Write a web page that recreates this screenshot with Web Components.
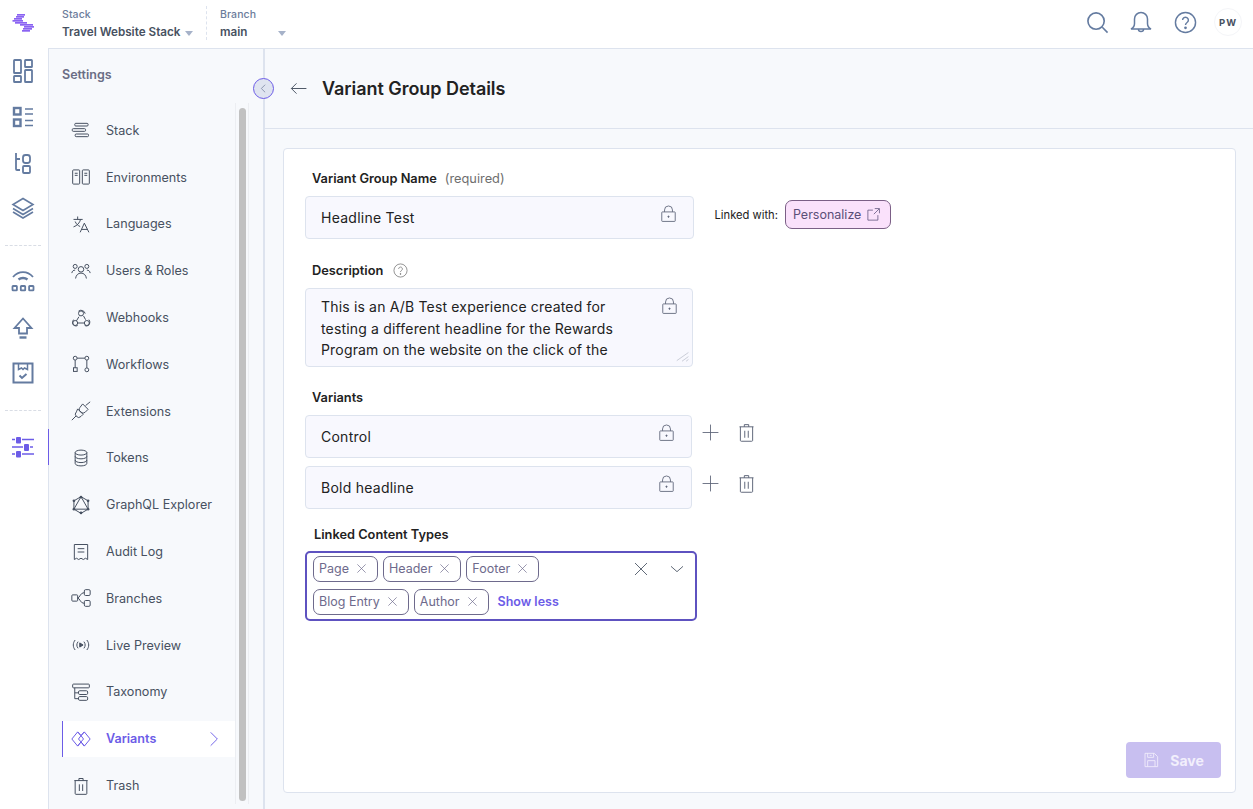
<!DOCTYPE html>
<html lang="en"><head><meta charset="utf-8"><title>Variant Group Details</title>
<style>
html,body{margin:0;padding:0;height:100%;overflow:hidden}
body{font-family:Inter,"Liberation Sans",sans-serif;background:#fff;color:#222}
</style></head><body>
<app-shell>
  <top-bar slot="top"></top-bar>
  <side-rail slot="rail"></side-rail>
  <settings-nav slot="nav"></settings-nav>
  <main-panel slot="main"></main-panel>
</app-shell>
<script>
const ICONS={
logo:`<g fill="#8a63f2" stroke="none"><rect x="5" y="3" width="8" height="1.700"/><rect x="4" y="5" width="8" height="1.700"/><rect x="2" y="7" width="8" height="1.700"/><rect x=".5" y="9" width="10.500" height="1.700"/><rect x="3" y="11" width="12" height="1.700"/><rect x="8" y="13" width="13" height="1.700"/><rect x="12" y="15" width="10" height="1.700"/><rect x="11" y="17" width="9" height="1.700"/><rect x="10" y="19" width="8" height="1.700"/></g>`,
dash:`<rect x="3" y="1" width="7" height="13" rx=".6"/><rect x="14" y="1" width="7" height="7" rx=".6"/><rect x="3" y="17" width="7" height="6" rx=".6"/><rect x="14" y="11" width="7" height="12" rx=".6"/>`,
list:`<g stroke-width="2.400"><rect x="3" y="3" width="6.500" height="6.500"/><rect x="3" y="14.500" width="6.500" height="6.500"/></g><path d="M14 4h8M14 9h8M14 15.500h8M14 20.500h8"/>`,
tree:`<path d="M5 2v16a1 1 0 0 0 1 1h3M5 8h4"/><rect x="12" y="4" width="7" height="8" rx="2.500"/><rect x="12" y="15" width="7" height="7" rx="1"/>`,
layers:`<path d="M12 2.500 22 8.500 12 14.500 2 8.500Z"/><path d="M2 12.500 12 18.500 22 12.500"/><path d="M2 16 12 22 22 16"/>`,
deliver:`<path d="M2 7C7.500 .5 16.500 .5 22 7"/><path d="M7.500 9.500C10 7.500 14 7.500 16.500 9.500" stroke-width="2.400"/><rect x="1.500" y="16" width="4.400" height="4.400" rx=".6"/><rect x="9.800" y="16" width="4.400" height="4.400" rx=".6"/><rect x="18.100" y="16" width="4.400" height="4.400" rx=".6"/>`,
up:`<path d="M12 2.500 3.500 12H8v5.500h8V12h4.500Z"/><path d="M8.500 21.500h7" stroke-width="2.400"/>`,
task:`<path d="M2.500 2.500h19v19h-19Z"/><path d="M7.500 2.500v6l3-1.500 1.500 1.500L13.500 7l3 1.500v-6" stroke-width="1.500"/><path d="m8.500 14.500 2.500 2.500 4.500-4"/>`,
sliders:`<g fill="#6c5ce7" stroke="none"><rect x="5" y="2" width="5" height="6.500" rx="1"/><rect x="13" y="9" width="5" height="7" rx="1"/><rect x="5" y="16" width="5" height="6.500" rx="1"/></g><path d="M1 4.500h3M11 4.500h12M1 12h11M19 12h3M1 19h3M11 19h12" stroke="#6c5ce7"/>`,
stack:`<rect x="4.500" y="4" width="16" height="3.200" rx="1.200"/><rect x="1.500" y="10.400" width="16" height="3.200" rx="1.200"/><rect x="5" y="16.800" width="16" height="3.200" rx="1.200"/>`,
env:`<rect x="2" y="3.500" width="8.400" height="17" rx="1"/><rect x="13.600" y="3.500" width="8.400" height="17" rx="1"/><path d="M4.500 7.500H8M4.500 10H8M16 7.500h3.500M16 10h3.500"/>`,
lang:`<path d="M3 6.500h11M8 3v3.500M11.500 6.500c-1 4-4 7.500-8.500 9M5 9c1.200 3 3.400 5 6 6"/><path d="m11 22 5-11 5.500 11M12.800 18.500h7.400"/>`,
users:`<circle cx="12" cy="10" r="3.300"/><path d="M5.500 21c.5-4 3-6.500 6.500-6.500s6 2.500 6.500 6.500"/><circle cx="5" cy="6.500" r="2.400"/><circle cx="19" cy="6.500" r="2.400"/><path d="M1 14.500c.3-2.300 1.800-3.600 4-3.600M23 14.500c-.3-2.300-1.800-3.600-4-3.600"/>`,
hook:`<circle cx="12" cy="6.500" r="3"/><circle cx="5" cy="18" r="3"/><circle cx="19" cy="18" r="3"/><path d="M9.500 10.500 6.500 15.500M8 18h8M15 9.500 17.500 14"/><path d="M9 3.800a5 5 0 0 1 8 3M3 14a6 6 0 0 0-1 4 4 4 0 0 0 6 3M21.500 14a5 5 0 0 1 1 4 4 4 0 0 1-6 3"/>`,
flow:`<circle cx="5" cy="5" r="2.300"/><circle cx="19" cy="5" r="2.300"/><rect x="3" y="16.500" width="4.400" height="4.400"/><circle cx="19" cy="19" r="2.300"/><path d="M7.300 5h9.400M5 7.300v9.200M19 7.300v9.400"/>`,
ext:`<path d="M23 1 17.500 5.500M1 23l5-5"/><path d="m14 3.500 6.500 6.500-3.500 3.500a3.500 3.500 0 0 1-5-.2 3.500 3.500 0 0 1-1.300-5.500Z"/><path d="m8 9.500 6.500 6.500-2.500 2.500a3.800 3.800 0 0 1-5.500 0 3.800 3.800 0 0 1 0-5.500Z"/>`,
tokens:`<ellipse cx="12" cy="5.500" rx="7" ry="3"/><path d="M5 5.500v13c0 1.700 3.100 3 7 3s7-1.300 7-3v-13M5 10c0 1.700 3.100 3 7 3s7-1.300 7-3M5 14.500c0 1.700 3.100 3 7 3s7-1.300 7-3"/>`,
graphql:`<path d="M12 2 20.500 7v10L12 22 3.500 17V7Z"/><path d="M12 2 3.500 17h17Z"/><g fill="#475161" stroke="none"><circle cx="12" cy="2.500" r="1.600"/><circle cx="20.500" cy="7" r="1.600"/><circle cx="20.500" cy="17" r="1.600"/><circle cx="12" cy="21.500" r="1.600"/><circle cx="3.500" cy="17" r="1.600"/><circle cx="3.500" cy="7" r="1.600"/></g>`,
audit:`<path d="M4 21V3h16v18l-2.600-1.500-2.600 1.500-2.800-1.500-2.800 1.500-2.600-1.500Z"/><path d="M8 8h8M8 12h8"/>`,
branch:`<rect x="1" y="8.250" width="7" height="7.500" rx="1"/><rect x="16" y="2" width="7" height="7" rx="1.500"/><rect x="16" y="15" width="7" height="7" rx="1.500"/><path d="M8 12c3-.5 3-6.500 8-6.500M8 12c3 .5 3 6.500 8 6.500"/>`,
live:`<path d="M5 6c-3 3.600-3 8.400 0 12M8.500 8c-2 2.600-2 5.400 0 8M19 6c3 3.600 3 8.400 0 12M15.500 8c2 2.600 2 5.400 0 8"/><path d="M10.500 9.500v5l4-2.500Z" fill="#475161"/>`,
tax:`<rect x="2" y="2.500" width="20" height="4.500" rx="1"/><path d="M4.500 7v13h4M4.500 13h4"/><rect x="9" y="10.500" width="11" height="4.500" rx="1.500"/><rect x="9" y="17.500" width="11" height="4.500" rx="1.500"/>`,
variants:`<path d="M8 3.500 1 12l7 8.500 4-5-3-3.500 3-4Z"/><path d="M16 3.500 23 12l-7 8.500-4-5 3-3.500-3-4Z"/><path d="M8 3.500 12 8M16 3.500 12 8M8 20.500l4-5M16 20.500l-4-5"/>`,
trash:`<path d="M4 5.500h16M9.500 5.500V3h5v2.500M5 5.500V21a1 1 0 0 0 1 1h12a1 1 0 0 0 1-1V5.500M10 10v8M14 10v8"/>`,
search:`<circle cx="10.500" cy="10.500" r="8.500"/><path d="m17 17 5.500 5.500"/>`,
bell:`<path d="M2 19c2-1 3.500-2.500 3.500-5.500V9a6.500 6.500 0 0 1 13 0v4.500c0 3 1.500 4.500 3.500 5.500Z"/><path d="M9.500 19v.500a2.500 2 0 0 0 5 0V19"/>`,
help:`<circle cx="12" cy="12" r="10.500"/><path d="M9 9.500a3 3 0 1 1 4.600 2.500c-1 .7-1.600 1.300-1.600 2.500"/><circle cx="12" cy="17.500" r=".7" fill="currentColor"/>`,
back:`<path d="M22 12H3M9.500 5.500 3 12l6.500 6.500"/>`,
chevL:`<path d="M15 5l-7 7 7 7"/>`,
chevR:`<path d="m7 2 10 10-10 10"/>`,
chevD:`<path d="m3 8 9 8 9-8"/>`,
lock:`<rect x="3.500" y="10" width="17" height="12" rx=".8"/><path d="M7 10V7.500a5 5 0 0 1 10 0V10"/><circle cx="12" cy="16" r=".8" fill="currentColor"/>`,
plus:`<path d="M12 2v20M2 12h20"/>`,
close:`<path d="m3 3 18 18M21 3 3 21"/>`,
open:`<path d="M11 5H3v16h16v-8"/><path d="M14 2.500h7.500V10M21 3l-8.500 8.500"/>`,
save:`<path d="M3 2h14l5 5v15H3Z"/><path d="M7 2v6h9V2M7 22v-9h11v9M10 5h3"/>`,
resize:`<path d="M23 6 3 20M23 13 12 21M23 18l-4 3"/>`,
qmark:`<circle cx="12" cy="12" r="10.500"/><path d="M9 9.500a3 3 0 1 1 4.600 2.500c-1 .7-1.600 1.300-1.600 2.500"/><circle cx="12" cy="17.500" r=".7" fill="currentColor"/>`
};
function def(name,html,extra){
  const t=document.createElement('template');t.innerHTML=html;
  customElements.define(name,class extends HTMLElement{
    constructor(){super();this.attachShadow({mode:'open'}).appendChild(t.content.cloneNode(true));}
    connectedCallback(){extra&&extra.call(this)}
  });
}
customElements.define('ui-icon',class extends HTMLElement{
  connectedCallback(){
    const s=this.getAttribute('size')||20,w=this.getAttribute('w')||1.3;
    const r=this.shadowRoot||this.attachShadow({mode:'open'});
    r.innerHTML=`<style>:host{display:inline-flex;flex:none;line-height:0}</style><svg width="${s}" height="${s}" viewBox="0 0 24 24" fill="none" stroke="currentColor" stroke-width="${w}">${ICONS[this.getAttribute('name')]||''}</svg>`;
  }
});
def('app-shell',`<style>
:host{display:grid;grid-template-columns:49px 216px 1fr;grid-template-rows:48px 1fr;width:1253px;height:809px;overflow:hidden}
.t{grid-column:1/-1;display:block}
</style><div class="t"><slot name="top"></slot></div><slot name="rail"></slot><slot name="nav"></slot><slot name="main"></slot>`);
def('top-bar',`<style>
:host{display:flex;align-items:stretch;height:48px;box-sizing:border-box;background:#fff;color:#475161}
.logo{width:48px;display:flex;align-items:center;justify-content:center;padding-bottom:2px;box-sizing:border-box}
.crumb{display:flex;flex-direction:column;justify-content:flex-start;padding:8px 0 0 14px;position:relative}
.a{margin-right:11px;width:133px}.b{border-left:1px dashed #dde3ee;margin:6px 0 8px;padding:2px 0 0 13px;width:80px}
small{font-size:10.500px;font-weight:500;color:#6c7c9b;line-height:13px;letter-spacing:.1px}
b{font-size:11.700px;font-weight:600;color:#475161;line-height:20px;white-space:nowrap;margin-top:1px}
.caret{display:inline-block;border:4px solid transparent;border-top:5px solid #a6b2c9;border-bottom:0;vertical-align:0;margin-left:4px}
.b .caret{margin-left:31px}
.sp{flex:1}
.r{display:flex;align-items:center;color:#647ba0;padding:0 11px 4px 0}
.r ui-icon{margin-right:21px}
.av{width:28px;height:28px;border-radius:50%;border:1px solid #f4f5f8;display:flex;align-items:center;justify-content:center;font-size:9.500px;font-weight:700;letter-spacing:1px;color:#475161;box-sizing:border-box;margin-left:-4px}
</style>
<div class="logo"><ui-icon name="logo" size="24"></ui-icon></div>
<div class="crumb a"><small>Stack</small><b>Travel Website Stack<span class="caret"></span></b></div>
<div class="crumb b"><small>Branch</small><b>main<span class="caret"></span></b></div>
<div class="sp"></div>
<div class="r"><ui-icon name="search" size="23" w="1.700" style="margin-right:20px"></ui-icon><ui-icon name="bell" size="24" w="1.500" style="margin-right:21px"></ui-icon><ui-icon name="help" size="23" w="1.500"></ui-icon><div class="av">PW</div></div>`);
def('side-rail',`<style>
:host{display:flex;flex-direction:column;align-items:center;background:#fff;border-right:1px solid #dde3ee;width:49px;color:#647ba0;padding:11px 2px 0 0;box-sizing:border-box}
ui-icon{flex:none}
hr{flex:none;width:36px;border:0;border-top:1px dashed #d9dde5;margin:25px 0 24px}
.act{position:relative;align-self:stretch;margin-right:-2px;display:flex;justify-content:center;padding:6px 2px 6px 0;margin-top:-6px;height:36px;box-sizing:border-box}
.act::after{content:"";position:absolute;right:-1px;top:0;bottom:0;width:1.500px;background:#6c5ce7}
</style>
<ui-icon name="dash" size="24" w="1.800"></ui-icon><ui-icon name="list" size="24" w="1.700" style="margin-top:22px"></ui-icon><ui-icon name="tree" size="24" w="1.800" style="margin-top:22px"></ui-icon><ui-icon name="layers" size="24" w="1.600" style="margin-top:21px"></ui-icon>
<hr>
<ui-icon name="deliver" size="24" w="1.800"></ui-icon><ui-icon name="up" size="24" w="1.800" style="margin-top:22px"></ui-icon><ui-icon name="task" size="24" w="2" style="margin-top:21px"></ui-icon>
<hr>
<div class="act"><ui-icon name="sliders" size="24" w="1.600"></ui-icon></div>`);
def('nav-item',`<style>
:host{display:flex;align-items:center;height:46.800px;box-sizing:border-box;padding-left:9px;font-size:12.600px;color:#475161;margin-left:13px;position:relative}
ui-icon{margin-right:15px;color:#475161}
:host([active]){color:#6c5ce7;font-weight:600;background:#fff;height:36px;margin:5.300px 0 5.500px 13px;border-left:1px solid #6c5ce7;padding-left:8px}
:host([active]) ui-icon{color:#6c5ce7}
.c{display:none;position:absolute;right:13px;top:10px;margin:0}
:host([active]) .c{display:block}
</style><ui-icon></ui-icon><slot></slot><ui-icon class="c" name="chevR" size="16" w="1.400"></ui-icon>`,function(){
  const i=this.shadowRoot.querySelector('ui-icon:not(.c)');i.setAttribute('name',this.getAttribute('icon'));i.setAttribute('size','20');i.setAttribute('w','1.200');i.connectedCallback();
});
def('settings-nav',`<style>
:host{display:flex;flex-direction:column;background:#f7f9fc;border-right:2px solid #dde3ee;border-top:1px solid #dde3ee;box-sizing:border-box;position:relative;width:216px;min-height:0;overflow:visible}
h2{margin:0;height:58px;padding:18px 0 0 13px;box-sizing:border-box;font-size:12.500px;font-weight:600;color:#6a6d85;line-height:15px}
.w{flex:1;display:flex;min-height:0}
.l{width:186px;flex:none;overflow:hidden}
.s{width:14px;background:#f7f9fc;border-left:1px solid #eceef2;border-right:1px solid #eceef2;box-sizing:border-box;padding:5px 2px 3px 3px;margin:-4px 0 5px;display:flex}
.s i{display:block;width:8px;background:#c1c1c1;border-radius:4px;flex:1}
.col{position:absolute;right:-11px;top:29px;width:21px;height:21px;border:1px solid #6c5ce7;border-radius:50%;background:#dfe4f0;display:flex;align-items:center;justify-content:center;color:#7b86a3;z-index:3;box-sizing:border-box}
</style>
<h2>Settings</h2>
<div class="col"><ui-icon name="chevL" size="13" w="1.500"></ui-icon></div>
<div class="w"><div class="l">
<nav-item icon="stack">Stack</nav-item><nav-item icon="env">Environments</nav-item><nav-item icon="lang">Languages</nav-item><nav-item icon="users">Users &amp; Roles</nav-item><nav-item icon="hook">Webhooks</nav-item><nav-item icon="flow">Workflows</nav-item><nav-item icon="ext">Extensions</nav-item><nav-item icon="tokens">Tokens</nav-item><nav-item icon="graphql">GraphQL Explorer</nav-item><nav-item icon="audit">Audit Log</nav-item><nav-item icon="branch">Branches</nav-item><nav-item icon="live">Live Preview</nav-item><nav-item icon="tax">Taxonomy</nav-item><nav-item icon="variants" active>Variants</nav-item><nav-item icon="trash">Trash</nav-item>
</div><div class="s"><i></i></div></div>`);
def('text-field',`<style>
:host{display:flex;align-items:center;justify-content:space-between;box-sizing:border-box;background:#f8f8fe;border:1px solid #dde3ee;border-radius:4px;height:43px;padding:0 15px;font-size:14px;color:#222;letter-spacing:.25px;position:relative;overflow:hidden}
ui-icon{color:#5d6478;position:relative;top:-4px}
</style><span><slot></slot></span><ui-icon name="lock" size="19" w="1.100"></ui-icon>`);
def('tag-chip',`<style>
:host{display:inline-flex;align-items:center;height:26px;box-sizing:border-box;border:1px solid #6e6a8c;border-radius:7px;padding:0 10px 1px 5px;font-size:12.500px;color:#6e6a8c;gap:7px;background:#fff}
ui-icon{color:#6e6a8c}
</style><slot></slot><ui-icon name="close" size="11" w="1.500"></ui-icon>`);
def('main-panel',`<style>
:host{display:flex;flex-direction:column;background:#f7f9fc;min-width:0;min-height:0;border-top:1px solid #dde3ee}
header{height:80px;box-sizing:border-box;border-bottom:1px solid #dde3ee;display:flex;align-items:center;padding:0 0 0 24px;gap:14px;color:#475161;flex:none}
h1{margin:0;font-size:18px;font-weight:600;color:#222;letter-spacing:-.05px}
.c{flex:none;margin:19px 17px 15px 18px;height:645px;box-sizing:border-box;background:#fff;border:1px solid #dde3ee;border-radius:4px;padding:21px 14px 14px 21px;display:flex;flex-direction:column}
label{display:flex;align-items:center;font-size:12.800px;font-weight:600;color:#222;height:16px;padding-left:7px;gap:8px}
label em{font-style:normal;font-weight:400;color:#6e6e6e}
label ui-icon{color:#666;margin-left:2px}
.row{display:flex;align-items:center;margin-top:10px}
.link{margin-left:20.500px;font-size:11.200px;color:#222;display:flex;align-items:center;gap:7px;margin-top:-6px}
.pill{display:inline-flex;align-items:center;gap:5px;height:29px;box-sizing:border-box;padding:0 9px 0 7px;background:#fae1fb;border:1px solid #7b5f86;border-radius:7px;font-size:12.500px;color:#5a4f78}
.ta{width:388px;height:79px;display:block;box-sizing:border-box;background:#f8f8fe;border:1px solid #dde3ee;border-radius:4px;padding:7px 15px;font-size:14px;line-height:21.500px;color:#222;position:relative;overflow:hidden;letter-spacing:.17px}
.ta .lk{position:absolute;right:13px;top:7px;color:#5d6478}
.ta .rz{position:absolute;right:3px;bottom:3px;color:#aab0bd}
.acts{display:flex;align-items:center;margin-top:-9px;margin-left:9px;color:#5d6478;gap:16px}
.sel{width:392px;height:70px;box-sizing:border-box;border:2px solid #5e52c0;border-radius:5px;padding:3px 6px;display:flex;justify-content:space-between;margin-top:9px}
.tags{display:flex;flex-wrap:wrap;column-gap:5px;row-gap:7px;width:300px;align-items:center;align-content:flex-start}
.tags a{font-size:12.500px;font-weight:600;color:#6c5ce7;margin-left:4px;margin-top:-1px}
.ctl{display:flex;gap:20px;padding:5px 4px 0 0;height:16px;color:#475161;align-items:center}
.save{align-self:flex-end;margin-top:auto;width:95px;height:36px;background:#c8bff0;border-radius:4px;color:#f2effc;font-size:14px;font-weight:700;display:flex;align-items:center;justify-content:center;gap:11px}
</style>
<header><ui-icon name="back" size="19" w="1.200"></ui-icon><h1>Variant Group Details</h1></header>
<div class="c">
<label>Variant Group Name <em>(required)</em></label>
<div class="row"><text-field style="width:389px">Headline Test</text-field><div class="link">Linked with: <span class="pill">Personalize <ui-icon name="open" size="15" w="1.200"></ui-icon></span></div></div>
<label style="margin-top:23px">Description <ui-icon name="qmark" size="15" w="1.100"></ui-icon></label>
<div class="row"><div class="ta">This is an A/B Test experience created for<br>testing a different headline for the Rewards<br>Program on the website on the click of the<ui-icon class="lk" name="lock" size="19" w="1.100"></ui-icon><ui-icon class="rz" name="resize" size="14" w="1"></ui-icon></div></div>
<label style="margin-top:22px">Variants</label>
<div class="row"><text-field style="width:387px">Control</text-field><div class="acts"><ui-icon name="plus" size="19" w="1.100"></ui-icon><ui-icon name="trash" size="21" w="1.100"></ui-icon></div></div>
<div class="row" style="margin-top:8px"><text-field style="width:387px">Bold headline</text-field><div class="acts"><ui-icon name="plus" size="19" w="1.100"></ui-icon><ui-icon name="trash" size="21" w="1.100"></ui-icon></div></div>
<label style="margin-top:17px;padding-left:9px">Linked Content Types</label>
<div class="sel"><div class="tags"><tag-chip>Page</tag-chip><tag-chip>Header</tag-chip><tag-chip>Footer</tag-chip><tag-chip>Blog Entry</tag-chip><tag-chip>Author</tag-chip><a>Show less</a></div>
<div class="ctl"><ui-icon name="close" size="16" w="1.300"></ui-icon><ui-icon name="chevD" size="16" w="1.300"></ui-icon></div></div>
<div class="save"><ui-icon name="save" size="16" w="1.300"></ui-icon>Save</div>
</div>`);
</script>
</body></html>
